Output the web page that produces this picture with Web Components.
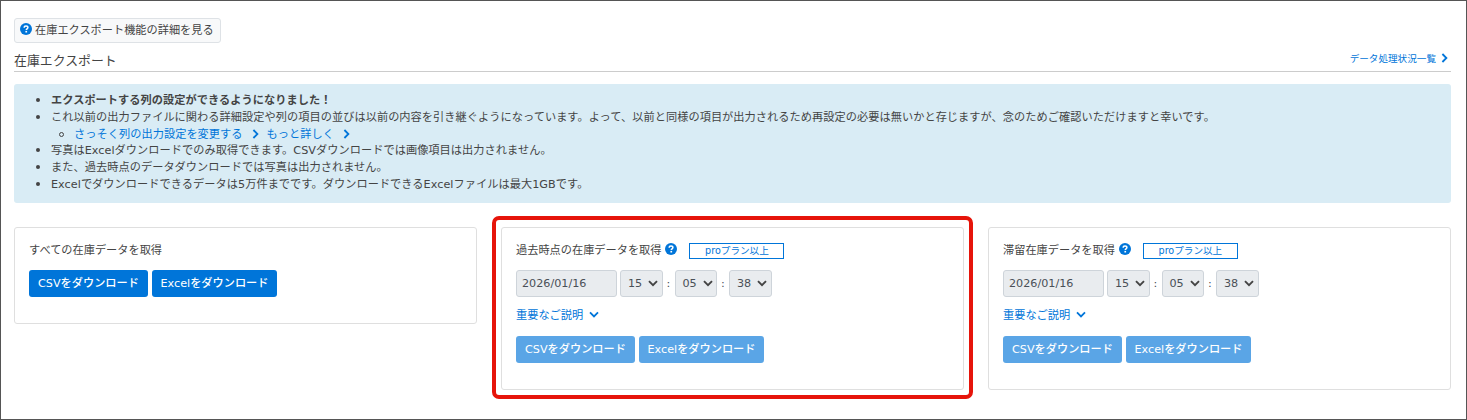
<!DOCTYPE html>
<html lang="ja"><head><meta charset="utf-8"><title>在庫エクスポート</title>
<style>
html,body{margin:0;padding:0;background:#fff}
body{font-family:"DejaVu Sans","Noto Sans CJK JP",sans-serif;font-size:11.2px;color:#444}
</style></head><body>
<export-page></export-page>
<script>
const FONT='"DejaVu Sans","Noto Sans CJK JP",sans-serif';
const CHEV_R='<svg width="7" height="10" viewBox="0 0 7 10" style="vertical-align:-1px"><path d="M1.4 1 5.4 5 1.4 9" fill="none" stroke="#0075d9" stroke-width="1.8"/></svg>';
const CHEV_D='<svg width="10" height="7" viewBox="0 0 10 7"><path d="M1 1.4 5 5.4 9 1.4" fill="none" stroke="#0075d9" stroke-width="1.8"/></svg>';
const HELP='<svg width="12" height="12" viewBox="0 0 12 12"><circle cx="6" cy="6" r="6" fill="#0075d9"/><path d="M4.2 4.7C4.2 3.6 5 3 6 3s1.9.6 1.9 1.6c0 1.300-1.600 1.300-1.600 2.500" fill="none" stroke="#fff" stroke-width="1.500"/><rect x="5.400" y="7.900" width="1.700" height="1.600" fill="#fff"/></svg>';

function def(name,css,html){
  customElements.define(name,class extends HTMLElement{
    constructor(){super();const r=this.attachShadow({mode:'open'});
      r.innerHTML='<style>'+css+'</style>'+(typeof html==='function'?html(this):html);}
  });
}
def('help-icon',':host{display:inline-flex;width:12px;height:12px}',HELP);
def('dl-btn',`:host{display:inline-flex;align-items:center;justify-content:center;height:27px;box-sizing:border-box;padding-bottom:3px;background:#0075d9;color:#fff;border-radius:3px;font-size:11.2px;font-weight:500;white-space:nowrap;width:119px}
:host(.x){width:125px}
:host([disabled]){background:#5aa5e6}`,'<slot></slot>');
def('time-select',`:host{display:inline-flex;align-items:center;height:27px;box-sizing:border-box;border:1px solid #ced4da;border-radius:3px;background:#e9ecef;color:#495057;font-size:11.2px;padding-left:7px;gap:6px;width:42.5px}
svg{flex:none}`,'<slot></slot><svg width="10" height="7" viewBox="0 0 10 7"><path d="M1 1.200 5 5.200 9 1.200" fill="none" stroke="#444" stroke-width="1.900"/></svg>');
def('date-row',`:host{display:flex;align-items:center;height:27px;color:#495057}
.d{width:101px;height:27px;box-sizing:border-box;border:1px solid #ced4da;border-radius:3px;background:#e9ecef;display:flex;align-items:center;padding-left:5px;font-size:11.2px;margin-right:3px}
.c{width:12px;text-align:center;font-size:11.2px}`,
`<span class="d">2026/01/16</span><time-select>15</time-select><span class="c">:</span><time-select>05</time-select><span class="c">:</span><time-select>38</time-select>`);
def('btn-row',':host{display:flex;gap:4px}','<slot></slot>');
def('pro-badge',`:host{display:inline-flex;align-items:center;justify-content:center;width:95px;height:16px;box-sizing:border-box;border:1px solid #0075d9;color:#0075d9;font-size:9.600px;line-height:1;white-space:nowrap}`,'<slot></slot>');
def('stock-card',`:host{display:block;box-sizing:border-box;border:1px solid #dfdfdf;border-radius:3px;padding:12px 14px 0;background:#fff;height:var(--h,163px)}
.t{display:flex;align-items:center;height:18px;font-size:11.2px;color:#444}
.i{display:inline-flex;margin-left:4px}
.b{display:inline-flex;margin-left:12px;margin-top:4px}
.body{margin-top:12px}`,
el=>`<div class="t"><span>${el.getAttribute('heading')}</span>${el.hasAttribute('pro')?`<span class="i"><help-icon></help-icon></span><span class="b"><pro-badge>proプラン以上</pro-badge></span>`:''}</div><div class="body"><slot></slot></div>`);
def('detail-link',`:host{display:flex;align-items:center;gap:6px;height:18px;margin:8px 0 13px;color:#0075d9;font-size:11.2px}`,'<slot></slot>'+CHEV_D);
def('info-alert',`:host{display:block;box-sizing:border-box;height:119px;background:#d9ecf5;border-radius:3px;padding:9px 0 0;color:#444;font-size:11.2px;line-height:16.800px;letter-spacing:.05px}
ul{margin:0;padding:0 0 0 37px;list-style:none}
ul ul{padding-left:23px}
li::before{content:"";display:inline-block;width:4px;height:4px;border-radius:50%;background:#444;margin-left:-15px;margin-right:11px;vertical-align:2px}
ul ul li::before{box-sizing:border-box;width:5px;height:5px;background:none;border:1px solid #444;margin-right:10px;vertical-align:1px}
a{color:#0075d9;text-decoration:none}
svg{margin:0 8px 0 9px}`,
`<ul>
<li><b>エクスポートする列の設定ができるようになりました！</b></li>
<li>これ以前の出力ファイルに関わる詳細設定や列の項目の並びは以前の内容を引き継ぐようになっています。よって、以前と同様の項目が出力されるため再設定の必要は無いかと存じますが、念のためご確認いただけますと幸いです。
<ul><li><a>さっそく列の出力設定を変更する</a>${CHEV_R}<a>もっと詳しく</a>${CHEV_R}</li></ul></li>
<li>写真はExcelダウンロードでのみ取得できます。CSVダウンロードでは画像項目は出力されません。</li>
<li>また、過去時点のデータダウンロードでは写真は出力されません。</li>
<li>Excelでダウンロードできるデータは5万件までです。ダウンロードできるExcelファイルは最大1GBです。</li>
</ul>`);
def('section-head',`:host{display:flex;justify-content:space-between;align-items:center;height:29px;box-sizing:border-box;border-bottom:1px solid #ccc;color:#444;font-size:12.900px}
.l{margin-top:4px}
.r{display:flex;align-items:center;gap:5px;color:#0075d9;font-size:9.600px;margin:2px 3px 0 0}`,
`<span class="l">在庫エクスポート</span><span class="r">データ処理状況一覧${CHEV_R}</span>`);
def('help-btn',`:host{display:inline-flex;align-items:center;gap:3px;height:25px;box-sizing:border-box;padding:0 6px 3px 5px;border:1px solid #dee2e6;border-radius:3px;background:#f8f9fa;color:#444;font-size:11.2px}`,'<help-icon></help-icon><slot></slot>');
def('export-page',`:host{display:block;position:relative;box-sizing:border-box;width:1467px;height:420px;border:1px solid #555;padding:17px 15px 0 13px;font-family:${FONT};overflow:hidden}
.top{display:flex}
.cards{display:grid;grid-template-columns:463px 463px 463px;column-gap:24px;margin-top:24px;align-items:start}
.first{--h:97px}
info-alert{margin-top:12px}
.mark{position:absolute;left:491px;top:215px;width:481px;height:183px;box-sizing:border-box;border:4px solid #e6140a;border-radius:7px;pointer-events:none}`,
`<div class="top"><help-btn>在庫エクスポート機能の詳細を見る</help-btn></div>
<section-head></section-head>
<info-alert></info-alert>
<div class="cards">
<stock-card class="first" heading="すべての在庫データを取得"><btn-row><dl-btn>CSVをダウンロード</dl-btn><dl-btn class="x">Excelをダウンロード</dl-btn></btn-row></stock-card>
<stock-card pro heading="過去時点の在庫データを取得"><date-row></date-row><detail-link>重要なご説明</detail-link><btn-row><dl-btn disabled>CSVをダウンロード</dl-btn><dl-btn disabled class="x">Excelをダウンロード</dl-btn></btn-row></stock-card>
<stock-card pro heading="滞留在庫データを取得"><date-row></date-row><detail-link>重要なご説明</detail-link><btn-row><dl-btn disabled>CSVをダウンロード</dl-btn><dl-btn disabled class="x">Excelをダウンロード</dl-btn></btn-row></stock-card>
</div>
<div class="mark"></div>`);
</script>
</body></html>
